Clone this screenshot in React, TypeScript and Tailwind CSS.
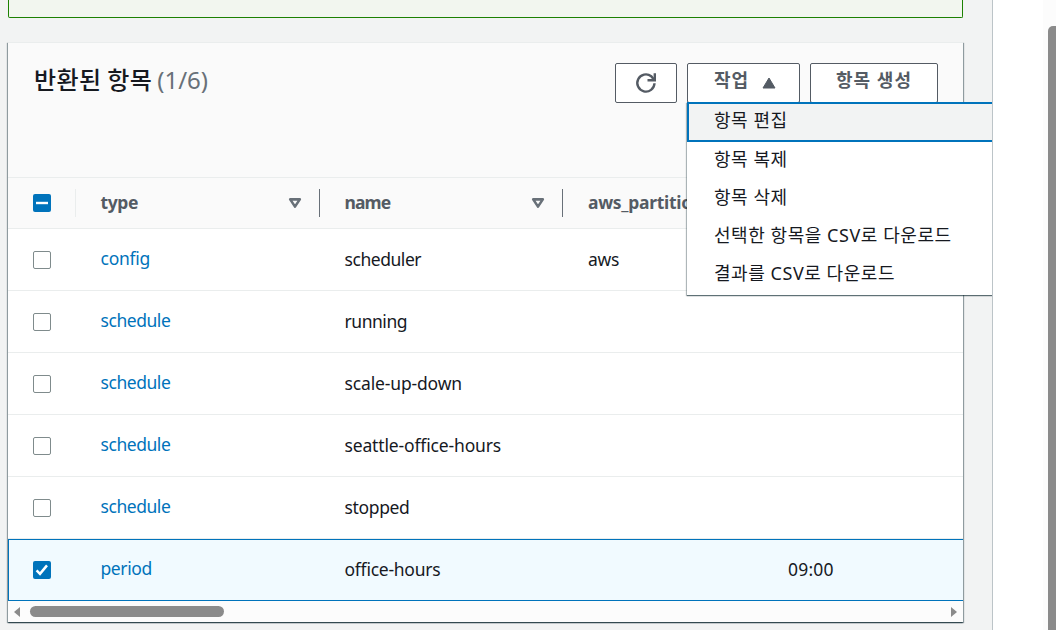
import React from "react";

type Row = { type: string; name: string; partition?: string; begin?: string; selected?: boolean; nameTracking: string; typeTracking: string };

const rows: Row[] = [
  { type: "config", name: "scheduler", partition: "aws", nameTracking: "tracking-[-0.45px]", typeTracking: "tracking-[-0.25px]" },
  { type: "schedule", name: "running", nameTracking: "tracking-[-0.45px]", typeTracking: "tracking-[-0.45px]" },
  { type: "schedule", name: "scale-up-down", nameTracking: "tracking-[-0.15px]", typeTracking: "tracking-[-0.45px]" },
  { type: "schedule", name: "seattle-office-hours", nameTracking: "tracking-[-0.15px]", typeTracking: "tracking-[-0.45px]" },
  { type: "schedule", name: "stopped", nameTracking: "tracking-[-0.35px]", typeTracking: "tracking-[-0.45px]" },
  { type: "period", name: "office-hours", begin: "09:00", selected: true, nameTracking: "tracking-[-0.25px]", typeTracking: "tracking-[-0.4px]" },
];

const menuItems = ["항목 복제", "항목 삭제", "선택한 항목을 CSV로 다운로드", "결과를 CSV로 다운로드"];

function Checkbox({ state }: { state: "off" | "on" | "mixed" }) {
  if (state === "off") {
    return <span className="block size-[18px] rounded-[2px] border border-[#7f8b8c] bg-white" />;
  }
  return (
    <span className="block size-[18px] rounded-[2px] bg-[#0073bb]">
      <svg viewBox="0 0 18 18" className="block size-[18px]" fill="none" stroke="white">
        {state === "on" ? <path d="M3.6 9.4 7 12.8 14 4.4" strokeWidth="2.5" /> : <path d="M3 9h12" strokeWidth="2.4" />}
      </svg>
    </span>
  );
}

function SortIcon() {
  return (
    <svg viewBox="0 0 14 12" className="h-3 w-3.5" fill="none" stroke="#687078" strokeWidth="2.6" strokeLinejoin="round">
      <path d="M2.2 2.4h9.6L7 9.6z" />
    </svg>
  );
}

function HeaderCell({ label, className, divider }: { label: string; className: string; divider?: boolean }) {
  return (
    <div className={`flex h-full shrink-0 items-center ${className}`}>
      <span className="pb-0.5 font-bold text-[#545b64]">{label}</span>
      {divider && (
        <span className="ml-auto flex items-center gap-[17px]">
          <SortIcon />
          <span className="h-7 w-px bg-[#687078]" />
        </span>
      )}
    </div>
  );
}

function ActionMenu() {
  return (
    <div className="absolute left-0 top-[39px] z-10 h-[193px] w-[340px] bg-white text-[18px] font-normal tracking-[0.55px] text-[#16191f] shadow-[0_1px_1px_rgba(0,28,36,0.5),-1px_1px_1px_rgba(0,28,36,0.25)]">
      <div className="flex h-10 items-center border-2 border-[#0073bb] bg-[#f2f3f3] pb-1 pl-[25px]">항목 편집</div>
      {menuItems.map((item) => (
        <div key={item} className="flex h-[38px] items-center whitespace-nowrap pb-1 pl-[27px]">
          {item}
        </div>
      ))}
    </div>
  );
}

export default function App() {
  return (
    <div className="flex h-[630px] w-[1056px] overflow-hidden bg-white font-['Noto_Sans','Noto_Sans_CJK_KR',sans-serif] text-[17.5px] leading-6">
      <main className="flex w-[993px] shrink-0 flex-col overflow-hidden border-r border-[#bcc4c8] bg-[#f2f3f3] pl-2">
        <div className="h-[18px] w-[955px] shrink-0 rounded-b-[2px] border border-t-0 border-[#1d8102] bg-[#f2f6ef]" />

        <section className="mt-6 flex h-[580px] w-[955px] shrink-0 flex-col border-t border-[#eaeded] bg-white shadow-[0_1px_1px_rgba(0,28,36,0.5),1px_1px_1px_rgba(0,28,36,0.35),-1px_1px_1px_rgba(0,28,36,0.35)]">
          <header className="flex h-[135px] shrink-0 items-start justify-between border-b border-[#eaeded] bg-[#fafafa] pl-[26px] pr-[25px] pt-5">
            <h1 className="flex h-9 items-center pb-1 text-[24px] text-[#16191f]">
              <span className="font-['Noto_Sans_CJK_KR'] font-medium tracking-[0.4px]">반환된 항목</span>
              <span className="ml-[5px] pt-0.5 font-normal tracking-[0px] text-[#687078]">(1/6)</span>
            </h1>
            <div className="flex text-[18px] font-bold text-[#545b64]">
              <button className="flex h-10 w-[62px] items-center justify-center rounded-[2px] border border-[#545b64] bg-white">
                <svg viewBox="0 0 22 22" className="size-[22px]" fill="none" stroke="#545b64" strokeWidth="2.4">
                  <path d="M19.5 11.3a8.6 8.6 0 1 1-3.3-7.1L19.3 8" />
                  <path d="M12.5 8.2h7.3V1.2" />
                </svg>
              </button>
              <div className="relative ml-2.5">
                <button className="flex h-10 w-[113px] items-center rounded-[2px] border border-[#545b64] bg-white pl-[26px]">
                  <span className="pb-1.5 tracking-[1px]">작업</span>
                  <svg viewBox="0 0 14 12" className="ml-[13px] h-3 w-3.5" fill="#545b64">
                    <path d="M7 1 13 11H1z" stroke="#545b64" strokeLinejoin="round" />
                  </svg>
                </button>
                <ActionMenu />
              </div>
              <button className="ml-2.5 flex h-10 w-32 items-center justify-center rounded-[2px] border border-[#545b64] bg-white pb-1.5 tracking-[1px]">
                항목 생성
              </button>
            </div>
          </header>

          <div className="flex h-[51px] shrink-0 items-center overflow-hidden border-b border-[#eaeded] bg-[#fafafa]">
            <div className="flex w-[68px] shrink-0 items-center justify-between pl-[25px]">
              <Checkbox state="mixed" />
              <span className="h-7 w-px bg-[#eaeded]" />
            </div>
            <HeaderCell label="type" className="w-[244px] pl-[24.5px] tracking-[-0.4px]" divider />
            <HeaderCell label="name" className="w-[243px] pl-[24.5px] tracking-[-0.9px]" divider />
            <HeaderCell label="aws_partition" className="w-[200px] pl-[25px] tracking-[-0.3px]" />
          </div>

          {rows.map((row) => (
            <div
              key={row.name}
              className={`flex h-[62px] shrink-0 items-center border-b ${row.selected ? "border-l border-t border-[#0073bb] bg-[#f1faff] pb-0.5" : "border-[#eaeded] pb-px pl-px"}`}
            >
              <div className="w-[67px] shrink-0 pl-6 pt-0.5">
                <Checkbox state={row.selected ? "on" : "off"} />
              </div>
              <a className={`w-[244px] shrink-0 pb-0.5 pl-[24.5px] text-[#0073bb] ${row.typeTracking}`}>{row.type}</a>
              <span className={`w-[243px] shrink-0 pl-[24.5px] text-[#16191f] ${row.nameTracking}`}>{row.name}</span>
              <span className="w-[200px] shrink-0 pl-[25px] tracking-[-0.3px] text-[#16191f]">{row.partition}</span>
              <span className="pl-[25px] tracking-[0.2px] text-[#16191f]">{row.begin}</span>
            </div>
          ))}

          <div className="flex h-[21px] shrink-0 items-center bg-[#fcfcfc] px-[6px]">
            <svg viewBox="0 0 6 10" className="h-2.5 w-1.5" fill="#8b8b8b">
              <path d="M6 0v10L0 5z" />
            </svg>
            <span className="ml-2.5 h-[11px] w-[194px] rounded-full bg-[#8b8b8b]" />
            <svg viewBox="0 0 6 10" className="ml-auto h-2.5 w-1.5" fill="#8b8b8b">
              <path d="M0 0v10L6 5z" />
            </svg>
          </div>
        </section>
      </main>

      <aside className="ml-auto flex w-[13px] justify-end bg-[#fcfcfc] pt-[26px]">
        <span className="w-2 rounded-tl-[5px] bg-[#8b8b8b]" />
      </aside>
    </div>
  );
}
